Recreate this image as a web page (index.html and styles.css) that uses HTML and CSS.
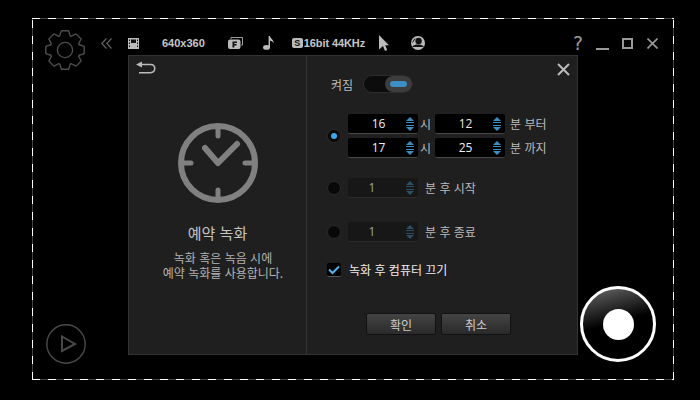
FILE: index.html
```html
<!DOCTYPE html>
<html lang="ko">
<head>
  <meta charset="UTF-8" />
  <title>예약 녹화</title>
  <link rel="stylesheet" href="styles.css">
</head>
<body>

  <svg class="defs" width="0" height="0">
    <symbol id="spin" viewBox="0 0 10 14">
      <path d="M5 0L9 4H1Z M1 5H9V6H1Z M1 8H9V9H1Z M1 10H9L5 14Z" fill="currentColor"/>
    </symbol>
  </svg>

  <div class="frame">

    <!-- Left column -->
    <div class="side">
      <div class="side-top">
        <svg class="gear" width="40" height="40" viewBox="-20 -20 40 40">
          <g fill="none" stroke="#4d4d4d" stroke-width="1.4" stroke-linejoin="round">
            <path id="tooth" d="M-5.5-13.4L-3.6-19.2H3.6L5.5-13.4"/>
            <use href="#tooth" transform="rotate(45)"/>
            <use href="#tooth" transform="rotate(90)"/>
            <use href="#tooth" transform="rotate(135)"/>
            <use href="#tooth" transform="rotate(180)"/>
            <use href="#tooth" transform="rotate(225)"/>
            <use href="#tooth" transform="rotate(270)"/>
            <use href="#tooth" transform="rotate(315)"/>
            <circle r="7.6"/>
          </g>
        </svg>
        <svg class="chevrons" width="11" height="11" viewBox="0 0 11 11">
          <path d="M5.5 .5L.8 5.5L5.5 10.5M10.5 .5L5.8 5.5L10.5 10.5" fill="none" stroke="#666" stroke-width="1.1"/>
        </svg>
      </div>
      <div class="play">
        <svg width="40" height="40" viewBox="0 0 40 40">
          <circle cx="20" cy="20" r="19.2" fill="none" stroke="#4a4a4a" stroke-width="1.4"/>
          <path d="M16 12.5L29 20L16 27Z" fill="none" stroke="#4a4a4a" stroke-width="2"/>
        </svg>
      </div>
    </div>

    <!-- Toolbar -->
    <div class="toolbar">
      <svg class="tool-film" width="11" height="11" viewBox="0 0 11 11">
        <path d="M0 0H11V11H0Z" fill="#bbb"/>
        <path d="M3 1.5H8V5H3ZM1 1.5H2V3H1ZM1 4.5H2V6H1ZM1 7.5H2V9H1ZM9 1.5H10V3H9ZM9 4.5H10V6H9ZM9 7.5H10V9H9Z" fill="#111"/>
      </svg>
      <span class="tool-text tool-size">640x360</span>
      <svg class="tool-f" width="15" height="12" viewBox="0 0 15 12">
        <path d="M3 2V.5H14.5V8H13" fill="none" stroke="#999"/>
        <rect x="0" y="2.5" width="12.5" height="9.5" rx="2" fill="#bbb"/>
        <path d="M4.5 4.5H9V6H6.3V7H8.5V8.5H6.3V10.5H4.5Z" fill="#111"/>
      </svg>
      <svg class="tool-note" width="11" height="14" viewBox="0 0 11 16" preserveAspectRatio="none">
        <ellipse cx="3.5" cy="13" rx="3.5" ry="2.8" fill="#bbb"/>
        <path d="M5.6 13V0H7C7.3 3 11 4 10.6 8.5C10 6.5 8.5 5.5 7 5.5V13Z" fill="#bbb"/>
      </svg>
      <span class="badge-s">S</span>
      <span class="tool-text tool-audio">16bit 44KHz</span>
      <svg class="tool-cursor" width="10" height="16" viewBox="0 0 10 15" preserveAspectRatio="none">
        <path d="M0 0L10 9.5H6.2L8.2 14L6 15L4 10.3L0 13.5Z" fill="#bbb"/>
      </svg>
      <svg class="tool-cam" width="14" height="14" viewBox="0 0 14 14">
        <circle cx="7" cy="7" r="7" fill="#bbb"/>
        <circle cx="7.6" cy="5" r="3.2" fill="#111"/>
        <path d="M1.5 10.2C4 8 10 8 12.6 10.2V11H1.5Z" fill="#111"/>
        <path d="M4 2.5L1.5 6.5" stroke="#111"/>
      </svg>
      <span class="tool-help">?</span>
      <span class="win-min"></span>
      <span class="win-max"></span>
      <svg class="win-close" width="11" height="11" viewBox="0 0 11 11">
        <path d="M.5 .5L10.5 10.5M10.5 .5L.5 10.5" stroke="#999" stroke-width="1.6"/>
      </svg>
    </div>

    <!-- Dialog -->
    <div class="panel">
      <div class="info">
        <svg class="back" width="20" height="13" viewBox="0 0 20 13">
          <path d="M0 3.5L6 .5V2.8H14.5C17.8 2.8 19.5 4.6 19.5 7.6C19.5 10.6 17.8 12.4 14.5 12.4H3V10.9H14.5C16.8 10.9 18 9.7 18 7.6C18 5.5 16.8 4.3 14.5 4.3H6V6.5Z" fill="#bbb"/>
        </svg>
        <svg class="clock" width="80" height="80" viewBox="0 0 80 80">
          <circle cx="40" cy="40" r="37" fill="none" stroke="#808080" stroke-width="6"/>
          <path d="M40 6V13M40 67V74M6 40H13M67 40H74" stroke="#808080" stroke-width="5" stroke-linecap="round"/>
          <path d="M27 25L40 40L59 21" fill="none" stroke="#808080" stroke-width="6" stroke-linecap="round" stroke-linejoin="round"/>
        </svg>
        <h1>예약 녹화</h1>
        <p>녹화 혹은 녹음 시에<br>예약 녹화를 사용합니다.</p>
      </div>

      <div class="options">
        <svg class="close" width="13" height="13" viewBox="0 0 13 13">
          <path d="M1 1L12 12M12 1L1 12" stroke="#bbb" stroke-width="2"/>
        </svg>

        <div class="power">
          <span>켜짐</span>
          <div class="toggle"><div class="knob"><div class="knob-light"></div></div></div>
        </div>

        <div class="row row-time">
          <span class="radio radio-on"></span>
          <div class="time-rows">
            <div class="time-row">
              <div class="spinner"><span class="value">16</span><svg width="10" height="14"><use href="#spin"/></svg></div>
              <span class="unit">시</span>
              <div class="spinner"><span class="value value-warm">12</span><svg width="10" height="14"><use href="#spin"/></svg></div>
              <span class="unit unit-end">분 부터</span>
            </div>
            <div class="time-row">
              <div class="spinner"><span class="value">17</span><svg width="10" height="14"><use href="#spin"/></svg></div>
              <span class="unit">시</span>
              <div class="spinner"><span class="value">25</span><svg width="10" height="14"><use href="#spin"/></svg></div>
              <span class="unit unit-end">분 까지</span>
            </div>
          </div>
        </div>

        <div class="row row-start">
          <span class="radio"></span>
          <div class="spinner spinner-off"><span class="value">1</span><svg width="10" height="14"><use href="#spin"/></svg></div>
          <span class="unit unit-wide">분 후 시작</span>
        </div>

        <div class="row row-stop">
          <span class="radio"></span>
          <div class="spinner spinner-off"><span class="value">1</span><svg width="10" height="14"><use href="#spin"/></svg></div>
          <span class="unit unit-wide">분 후 종료</span>
        </div>

        <div class="row row-check">
          <span class="check">
            <svg width="12" height="10" viewBox="0 0 12 10"><path d="M1 4.5L4.5 8L11 1.5" fill="none" stroke="#4fb4ee" stroke-width="2"/></svg>
          </span>
          <span class="check-label">녹화 후 컴퓨터 끄기</span>
        </div>

        <div class="buttons">
          <button type="button">확인</button>
          <button type="button">취소</button>
        </div>
      </div>
    </div>

    <!-- Record button -->
    <div class="record-wrap">
      <div class="record"><div class="record-dot"></div></div>
    </div>

  </div>

</body>
</html>
```

FILE: styles.css
```css
html, body {
  margin: 0;
  height: 100%;
  background: #000;
  overflow: hidden;
}
body {
  font-family: "Noto Sans CJK KR", "Noto Sans", sans-serif;
  font-size: 12px;
  color: #bbb;
}
.defs {
  display: block;
}

/* Dashed capture frame */
.frame {
  box-sizing: border-box;
  width: 642px;
  height: 362px;
  margin: 18px 0 0 32px;
  display: grid;
  grid-template-columns: 96px 450px 1fr;
  grid-template-rows: 37px 300px 1fr;
  --dash: #fff 0 8px, #444 8px 16px;
  background:
    repeating-linear-gradient(90deg, var(--dash)) top / 100% 1px no-repeat,
    repeating-linear-gradient(90deg, var(--dash)) bottom / 100% 1px no-repeat,
    repeating-linear-gradient(0deg, var(--dash)) left / 1px 100% no-repeat,
    repeating-linear-gradient(0deg, var(--dash)) right / 1px 100% no-repeat;
}

/* Left column */
.side {
  grid-column: 1;
  grid-row: 1 / 4;
  display: flex;
  flex-direction: column;
  justify-content: space-between;
  padding: 12px 0 16px 13px;
}
.side-top {
  display: flex;
  align-items: flex-start;
}
.chevrons {
  margin: 8px 0 0 16px;
}
.play {
  display: flex;
  height: 40px;
  margin-left: 1px;
}

/* Toolbar */
.toolbar {
  grid-column: 2 / 4;
  grid-row: 1;
  display: flex;
  align-items: center;
  height: 26px;
  margin-top: 12px;
}
.tool-text {
  font-family: "Liberation Sans", sans-serif;
  font-size: 11px;
  font-weight: bold;
  color: #c6c6c6;
}
.tool-size { margin-left: 23px; }
.tool-f { margin-left: 23px; }
.tool-note { margin-left: 20px; }
.badge-s {
  box-sizing: border-box;
  width: 11px;
  height: 10px;
  margin-left: 18px;
  border-radius: 2px;
  background: #bbb;
  color: #111;
  font-family: "Liberation Sans", sans-serif;
  font-size: 9px;
  font-weight: bold;
  line-height: 10px;
  text-align: center;
}
.tool-audio { margin-left: 1px; letter-spacing: -0.1px; }
.tool-cursor { margin-left: 14px; }
.tool-cam { margin-left: 22px; }
.tool-help {
  margin-left: 148px;
  font-family: "DejaVu Sans", sans-serif;
  font-size: 19px;
  color: #999;
}
.win-min {
  width: 13px;
  height: 2px;
  margin: 12px 0 0 13px;
  background: #999;
}
.win-max {
  box-sizing: border-box;
  width: 11px;
  height: 11px;
  margin-left: 13px;
  border: 2px solid #999;
}
.win-close {
  margin-left: 14px;
}

/* Dialog */
.panel {
  grid-column: 2;
  grid-row: 2;
  box-sizing: border-box;
  display: flex;
  position: relative;
  border: 1px solid #333;
  background: #1f1f1f;
}
.info {
  box-sizing: border-box;
  width: 178px;
  border-right: 1px solid #333;
  display: flex;
  flex-direction: column;
  align-items: center;
  padding-top: 5px;
}
.back {
  align-self: flex-start;
  margin-left: 7px;
}
.clock {
  margin-top: 49px;
}
.info h1 {
  margin: 18px 0 0;
  font-size: 15px;
  font-weight: normal;
  line-height: 24px;
  color: #c4c4c4;
}
.info p {
  margin: 5px 0 0;
  padding-left: 11px;
  font-size: 12px;
  line-height: 15px;
  text-align: center;
  color: #b4b4b4;
}

.options {
  flex: 1;
  display: flex;
  flex-direction: column;
  padding: 19px 0 0 20px;
}
.close {
  position: absolute;
  top: 7px;
  right: 7px;
}
.power {
  display: flex;
  align-items: center;
  height: 18px;
  padding-left: 4px;
  gap: 10px;
}
.toggle {
  box-sizing: border-box;
  width: 50px;
  height: 18px;
  display: flex;
  justify-content: flex-end;
  border-radius: 9px;
  background: #0c0c0c;
  border: 1px solid #2c2c2c;
}
.knob {
  width: 27px;
  height: 16px;
  display: flex;
  align-items: center;
  justify-content: center;
  border-radius: 8px;
  background: #3d3d3d;
}
.knob-light {
  width: 17px;
  height: 6px;
  border-radius: 3px;
  background: #3b8fc4;
}

.row {
  display: flex;
  align-items: center;
}
.row-time { margin-top: 21px; }
.row-start { margin-top: 20px; }
.row-stop { margin-top: 24px; }
.row-check { margin-top: 21px; }
.time-rows {
  display: flex;
  flex-direction: column;
  gap: 4px;
}
.time-row {
  display: flex;
  align-items: center;
}
.radio {
  box-sizing: border-box;
  width: 14px;
  height: 14px;
  margin-right: 7px;
  display: flex;
  align-items: center;
  justify-content: center;
  border-radius: 50%;
  background: #080808;
  border: 1px solid #2a2a2a;
}
.radio-on::after {
  content: "";
  width: 6px;
  height: 6px;
  border-radius: 50%;
  background: #38a9f0;
}
.spinner {
  box-sizing: border-box;
  width: 70px;
  height: 20px;
  display: flex;
  align-items: center;
  border-radius: 2px;
  background: #000;
  border-bottom: 1px solid #4a4a4a;
  color: #3c8dbd;
}
.spinner svg {
  margin-right: 3px;
}
.value {
  flex: 1;
  padding-left: 4px;
  text-align: center;
  font-family: "Open Sans", sans-serif;
  font-size: 12px;
  color: #f0f0f0;
}
.value-warm {
  color: #f5e6d8;
}
.spinner-off {
  background: #171717;
  border-bottom-color: #2c2c2c;
  color: #2c4f63;
}
.spinner-off .value {
  padding: 0 9px 0 0;
  color: #9aa8a8;
}
.unit {
  width: 17px;
  padding: 0 0 2px 2px;
  box-sizing: border-box;
  color: #bbb;
}
.unit-end {
  width: auto;
  padding-left: 5px;
}
.unit-wide {
  width: auto;
  padding-left: 7px;
}
.check {
  box-sizing: border-box;
  width: 14px;
  height: 14px;
  display: flex;
  align-items: center;
  justify-content: center;
  border-radius: 2px;
  background: #000;
  border-bottom: 1px solid #555;
}
.check-label {
  margin-left: 8px;
  font-size: 12px;
  line-height: 14px;
  color: #eee;
}
.buttons {
  display: flex;
  gap: 5px;
  margin: 36px 0 0 39px;
}
.buttons button {
  width: 70px;
  height: 22px;
  padding: 0;
  border: 1px solid #111;
  border-radius: 2px;
  background: linear-gradient(#444, #2a2a2a);
  color: #ccc;
  font: 12px "Noto Sans CJK KR", sans-serif;
}

/* Record button */
.record-wrap {
  grid-column: 3;
  grid-row: 2 / 4;
  align-self: end;
  display: flex;
  justify-content: flex-end;
  padding: 0 18px 18px 0;
}
.record {
  box-sizing: border-box;
  width: 76px;
  height: 76px;
  display: flex;
  align-items: center;
  justify-content: center;
  border: 3px solid #fff;
  border-radius: 50%;
  background: linear-gradient(165deg, #6a6a6a 0, #000 48%);
}
.record-dot {
  width: 31px;
  height: 31px;
  border-radius: 50%;
  background: #fff;
}
```
